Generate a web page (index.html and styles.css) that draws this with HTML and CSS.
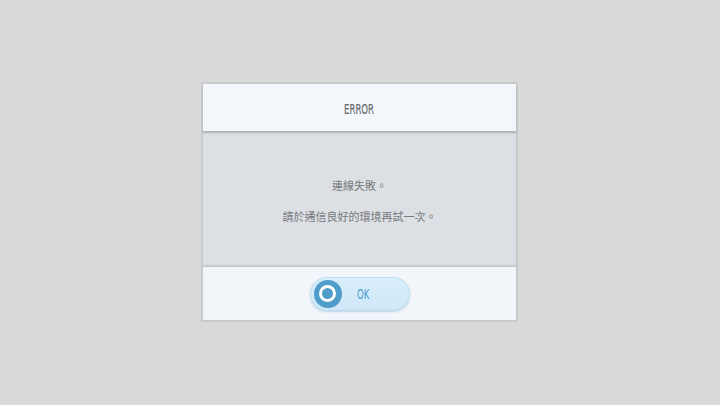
FILE: index.html
```html
<!DOCTYPE html>
<html>
<head>
<meta charset="utf-8">
<link rel="stylesheet" href="styles.css">
</head>
<body>
<div class="stage">
  <div class="dialog">
    <div class="header"><span class="title">ERROR</span></div>
    <div class="body">
      <p class="msg">連線失敗。</p>
      <p class="msg">請於通信良好的環境再試一次。</p>
    </div>
    <div class="footer">
      <button class="ok">
        <span class="ring"><span class="dot"></span></span>
        <span class="label">OK</span>
      </button>
    </div>
  </div>
</div>
</body>
</html>
```
FILE: styles.css
```css
html, body {
  margin: 0;
  padding: 0;
  width: 720px;
  height: 405px;
  background: #d9d9d9;
  overflow: hidden;
}
.stage {
  width: 720px;
  height: 405px;
  display: flex;
  align-items: flex-start;
  justify-content: center;
  padding-top: 82px;
  box-sizing: border-box;
}
.dialog {
  width: 317px;
  height: 240px;
  box-sizing: border-box;
  border: 2px solid #c9cacc;
  background: #f2f5fa;
  display: flex;
  flex-direction: column;
  margin-left: -1px;
}
.header {
  height: 47px;
  display: flex;
  align-items: center;
  justify-content: center;
  background: #f3f6fb;
  box-shadow: 0 2px 2px rgba(0,0,0,0.14);
  position: relative;
  z-index: 1;
}
.title {
  font-family: "DejaVu Sans Condensed", "DejaVu Sans", sans-serif;
  font-size: 14px;
  color: #6b6d70;
  display: inline-block;
  transform: scaleX(0.68);
  margin-top: 2px;
  -webkit-text-stroke: 0.2px #6b6d70;
}
.body {
  height: 136px;
  background: #dcdfe3;
  display: flex;
  flex-direction: column;
  align-items: center;
  justify-content: center;
  gap: 18px;
  box-shadow: inset 0 -3px 3px -2px rgba(0,0,0,0.18), inset 0 4px 3px -3px rgba(0,0,0,0.15);
  padding-top: 4px;
  box-sizing: border-box;
}
.msg {
  margin: 0;
  font-family: "Noto Sans CJK TC", "Noto Sans", sans-serif;
  font-size: 11px;
  line-height: 13px;
  color: #77797c;
}
.footer {
  flex: 1;
  background: #f2f5fa;
  display: flex;
  align-items: center;
  justify-content: center;
}
.ok {
  width: 100px;
  height: 34px;
  border-radius: 17px;
  border: 1px solid #b9dcf0;
  background: linear-gradient(#d9eefb, #cfe8f7);
  box-shadow: 0 1px 2px rgba(90,150,190,0.35);
  padding: 0 0 0 3px;
  display: flex;
  align-items: center;
  gap: 12px;
  cursor: pointer;
}
.ring {
  width: 28px;
  height: 28px;
  border-radius: 50%;
  background: #4e9dcb;
  display: flex;
  align-items: center;
  justify-content: center;
}
.dot {
  width: 11px;
  height: 11px;
  border-radius: 50%;
  background: #4e9dcb;
  border: 3px solid #ffffff;
  box-sizing: content-box;
}
.label {
  font-family: "DejaVu Sans Condensed", "DejaVu Sans", sans-serif;
  font-size: 14px;
  color: #4f9ccc;
  display: inline-block;
  transform: scaleX(0.68);
}
```
